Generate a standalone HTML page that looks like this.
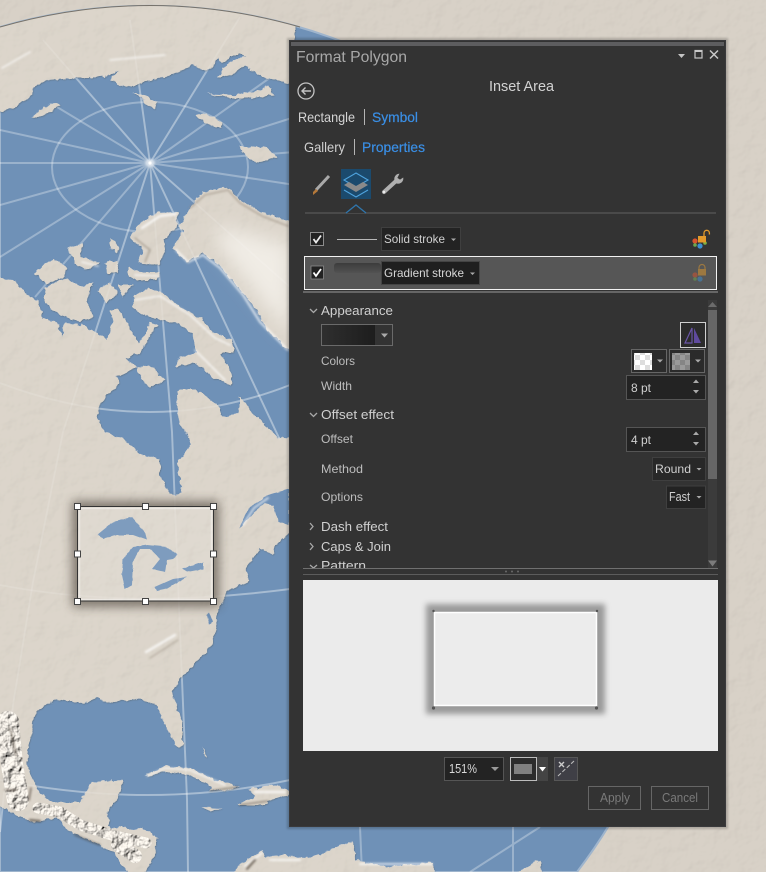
<!DOCTYPE html>
<html><head><meta charset="utf-8"><title>Format Polygon</title>
<style>html,body{margin:0;padding:0;background:#d5cfc6;width:766px;height:872px;overflow:hidden}svg{display:block}text{font-family:"Liberation Sans",sans-serif}</style></head>
<body>
<svg xmlns="http://www.w3.org/2000/svg" width="766" height="872" viewBox="0 0 766 872">
<defs>
<filter id="tex" x="0" y="0" width="100%" height="100%">
<feTurbulence type="fractalNoise" baseFrequency=".06" numOctaves="3" seed="4" result="n"/>
<feDiffuseLighting in="n" surfaceScale=".55" diffuseConstant="1.15" lighting-color="#fff" result="l"><feDistantLight azimuth="225" elevation="60"/></feDiffuseLighting>
<feBlend in="SourceGraphic" in2="l" mode="multiply" result="b"/>
<feComposite in="b" in2="SourceAlpha" operator="in"/>
</filter>
<filter id="land" x="-5%" y="-5%" width="110%" height="110%">
<feTurbulence type="fractalNoise" baseFrequency=".16" numOctaves="3" seed="9" result="w"/>
<feDisplacementMap in="SourceGraphic" in2="w" scale="5" xChannelSelector="R" yChannelSelector="G" result="d"/>
<feTurbulence type="fractalNoise" baseFrequency=".06" numOctaves="3" seed="4" result="n"/>
<feDiffuseLighting in="n" surfaceScale=".5" diffuseConstant="1.15" lighting-color="#fff" result="l"><feDistantLight azimuth="225" elevation="60"/></feDiffuseLighting>
<feBlend in="d" in2="l" mode="multiply" result="b"/>
<feComposite in="b" in2="d" operator="in" result="c"/>
<feDropShadow in="c" dx=".5" dy=".7" stdDeviation=".5" flood-color="#4a3f33" flood-opacity=".35"/>
</filter>
<filter id="wob" x="-5%" y="-5%" width="110%" height="110%">
<feTurbulence type="fractalNoise" baseFrequency=".12" numOctaves="2" seed="2" result="w"/>
<feDisplacementMap in="SourceGraphic" in2="w" scale="2.500" xChannelSelector="R" yChannelSelector="G"/>
</filter>
<filter id="rough" x="-10%" y="-10%" width="120%" height="120%">
<feTurbulence type="fractalNoise" baseFrequency=".11" numOctaves="3" seed="7" result="n"/>
<feDiffuseLighting in="n" surfaceScale="5" diffuseConstant="1.150" lighting-color="#f4efe7" result="l"><feDistantLight azimuth="225" elevation="55"/></feDiffuseLighting>
<feComposite in="l" in2="SourceAlpha" operator="in"/>
</filter>
<filter id="b1" x="-30%" y="-30%" width="160%" height="160%"><feGaussianBlur stdDeviation="1"/></filter>
<filter id="b3" x="-30%" y="-30%" width="160%" height="160%"><feGaussianBlur stdDeviation="3"/></filter>
<filter id="b5" x="-30%" y="-30%" width="160%" height="160%"><feGaussianBlur stdDeviation="5"/></filter>
<filter id="b8" x="-40%" y="-40%" width="180%" height="180%"><feGaussianBlur stdDeviation="9"/></filter>
<clipPath id="globe"><path d="M0 872V27A538.600 538.600 0 0 1 577 872Z"/></clipPath>
<clipPath id="outInset"><path clip-rule="evenodd" d="M0 0H300V800H0ZM78 507H213V601H78Z"/></clipPath>
<clipPath id="outPrev"><path clip-rule="evenodd" d="M303 580H718V751H303ZM434 612H597V706H434Z"/></clipPath>
<clipPath id="patClip"><rect x="300" y="550" width="405" height="18"/></clipPath>
<pattern id="ck1" width="10" height="10" patternUnits="userSpaceOnUse"><rect width="10" height="10" fill="#fff"/><rect width="5" height="5" fill="#ddd"/><rect x="5" y="5" width="5" height="5" fill="#ddd"/></pattern>
<pattern id="ck2" width="10" height="10" patternUnits="userSpaceOnUse"><rect width="10" height="10" fill="#9a9a9a"/><rect width="5" height="5" fill="#858585"/><rect x="5" y="5" width="5" height="5" fill="#858585"/></pattern>
<linearGradient id="gs" x1="0" x2="1" y1="0" y2="0"><stop offset="0" stop-color="#2f2f2f"/><stop offset="1" stop-color="#1d1d1d"/></linearGradient>
<linearGradient id="gs2" x1="0" x2="0" y1="0" y2="1"><stop offset="0" stop-color="#3c3c3c"/><stop offset="1" stop-color="#525252"/></linearGradient>
</defs>

<!-- Map background -->
<rect width="766" height="872" fill="#d8d1c7" filter="url(#tex)"/>
<path d="M0 872V27A538.600 538.600 0 0 1 577 872Z" fill="#6f91b7" stroke="#9fb5cd" stroke-width="2"/>

<g clip-path="url(#globe)">
<!-- graticule over ocean -->
<g fill="none" stroke="#fff" stroke-opacity=".3" stroke-width="2">
<path d="M150 163L43 40M150 163L130 20M150 163L240 17M150 163L295 60M150 163L295 117M150 163L295 152M150 163L295 185M150 163L280 440M150 163L290 287M150 163L172 432L180 632L187 799L188 872M150 163L63 432L33 582L13 705L0 832M150 163L0 257M150 163L0 205M150 163L0 163M150 163L0 130M150 163L57 107M150 163L35 297"/>
<ellipse cx="150" cy="167" rx="98" ry="65"/>
<path d="M0 383Q150 440 290 385M0 585Q130 610 290 589M0 780Q150 810 290 780"/>
<path d="M360 827L362 872M513 827L513 872M540 827L470 872"/>
</g>
<g filter="url(#land)" fill="#dcd5cb">
<!-- Siberia -->
<path d="M-5 113L13 108 25 100 33 95 32 88 45 80 77 78 90 78 110 75 118 70 110 80 127 87 140 83 160 78 180 72 192 65 207 72 213 67 217 57 223 63 233 55 247 55 227 63 217 78 233 75 245 65 263 78 277 80 295 85 295 -5 -5 -5Z"/>
<path d="M208 94L233 95 263 90 268 85 273 95 250 98 230 98Z"/>
<path d="M133 93L143 95 157 102 155 108 147 105 142 98Z"/>
<path d="M32 117L43 108 57 102 60 105 50 112 37 117Z"/>
<path d="M195 115L207 113 222 123 220 128 203 122Z"/>
<path d="M240 147L253 148 267 147 277 157 257 163 247 157Z"/>
<!-- Greenland -->
<path d="M193 203L203 192 227 187 240 200 263 213 295 223 295 355 267 330 257 310 240 290 217 263 203 253 187 263 173 248 183 230 178 227 187 213Z"/>
<!-- Arctic Canada -->
<path d="M140 223L157 213 178 212 177 227 163 240 165 253 158 265 138 263 143 250 130 237 137 227Z"/>
<path d="M67 247L83 243 80 257 100 263 87 270 75 263Z"/>
<path d="M110 238L120 247 117 253 110 248Z"/>
<path d="M105 263L117 260 118 273 108 273Z"/>
<path d="M128 267L140 272 160 272 158 280 137 280 128 275Z"/>
<path d="M35 273L53 258 67 268 63 278 45 283Z"/>
<path d="M45 287L67 278 83 287 93 282 87 300 93 317 80 322 60 315 45 302Z"/>
<path d="M98 290L110 283 117 293 107 303Z"/>
<path d="M118 285L132 285 122 297Z"/>
<path d="M133 297L147 288 163 293 180 307 200 317 213 333 233 340 233 353 220 353 233 377 230 385 213 377 193 362 175 367 180 357 197 353 192 333 177 323 160 320 140 313 133 307Z"/>
<path d="M137 367L150 365 165 380 150 388 140 377Z"/>
<!-- North America -->
<path d="M-5 278L13 280 25 293 37 300 43 313 42 318 57 322 62 337 65 323 83 325 97 333 107 340 113 320 110 310 120 310 132 333 140 343 150 323 158 325 147 340 140 353 125 358 137 367 117 377 120 382 100 403 97 417 105 432 123 439 143 455 160 459 160 475 170 494 177 495 182 492 177 465 190 445 187 432 178 423 177 390 197 390 220 407 222 417 240 413 240 397 253 413 277 437 300 440 300 535 289 535 283 537 273 548 274 555 260 548 245 570 250 580 227 592 217 614 213 645 197 662 180 679 172 692 183 725 183 744 177 747 163 722 157 705 140 699 107 702 97 697 83 704 57 699 37 710 33 723 27 757 28 770 38 790 50 802 80 802 92 782 123 780 118 797 107 813 110 827 147 830 157 838 155 853 143 877 132 877 113 853 97 843 67 830 57 817 33 822 -5 805Z"/>
<!-- Caribbean -->
<path d="M145 776L165 766 190 768 215 780 240 787 210 792 212 787 190 775 165 772Z"/>
<path d="M248 789L275 785 295 793 270 800 265 805 238 805 255 797Z"/>
<path d="M202 807L222 808 210 811Z"/>
<path d="M202 745L207 757 205 757Z"/>
<!-- South America -->
<path d="M228 877L243 863 263 850 265 857 280 855 310 858 347 843 353 842 355 860 387 867 433 862 435 877Z"/>
<path d="M507 877L540 860 542 877Z"/>
</g>
<!-- water cut-ins -->
<g fill="#6f91b7" filter="url(#wob)">
<path d="M239 528L250 507 268 495 289 489 289 525 278 522 273 505 265 503 254 512 243 525Z"/>
<path d="M97 535L113 522 132 517 145 532 147 540 133 535 117 535 103 539Z"/>
<path d="M123 559L133 547 147 545 167 547 178 555 173 559 167 560 165 572 152 569 160 559 150 549 140 549 133 562 132 585 125 589 122 575Z"/>
<path d="M155 587L173 579 187 577 167 589 157 591Z"/>
<path d="M182 569L203 562 203 569 187 572Z"/>
<path d="M209 612L213 622 209 625 207 615Z"/>
</g>
<!-- relief highlights -->
<path d="M215 225L290 245 290 335 250 285 222 250Z" fill="#f0ece5" filter="url(#b8)"/>
<g filter="url(#b1)" fill="none" stroke-linecap="round">
<g opacity=".55">
<path d="M190 208L205 195 228 190 240 203 262 216 288 226" stroke="#8e8273" stroke-width="1.600"/>
<path d="M135 238L150 250 145 262" stroke="#7a6e60" stroke-width="1.400"/>
<path d="M150 658L178 640" stroke="#8e8475" stroke-width="1.300"/>
</g>
<g opacity=".75">
<path d="M176 250L188 262 203 255 220 268 243 295 260 322 288 350" stroke="#fff" stroke-width="2"/>
<path d="M142 228L160 216 176 214" stroke="#fff" stroke-width="2.500"/>
<path d="M82 262L98 266M135 275L158 276" stroke="#fff" stroke-width="1.600"/>
<path d="M135 300L160 296 190 315 215 338 230 345M195 350L225 380" stroke="#fff" stroke-width="1.600"/>
<path d="M2 68L30 52M110 60L165 55" stroke="#fff" stroke-width="1.500"/>
<path d="M243 525L254 508 268 498" stroke="#fff" stroke-width="1.800"/>
<path d="M146 652L175 635" stroke="#fff" stroke-width="2.500"/>
<path d="M147 776L165 768 190 770 225 785" stroke="#fff" stroke-width="1.500"/>
<path d="M255 792L285 792" stroke="#fff" stroke-width="2.500"/>
<path d="M245 866L262 853M270 860L300 860M360 864L432 864" stroke="#fff" stroke-width="2"/>
</g>
</g>
<!-- Mexico / Central America relief -->
<g filter="url(#rough)" fill="none" stroke="#000" stroke-linejoin="round" stroke-linecap="round">
<path d="M8 722L12 765 18 800" stroke-width="22"/>
<path d="M38 808L60 812 80 825 115 836 146 843" stroke-width="11"/>
<path d="M118 845L135 856" stroke-width="14"/>
</g>
<g filter="url(#b1)" fill="none" stroke="#3d3025" stroke-linecap="round" opacity=".7">
<path d="M10 728L16 755" stroke-width="1.400"/>
<path d="M5 790H16M31 788L29 800" stroke-width="1.400"/>
<path d="M30 820L40 821" stroke-width="2"/>
<path d="M75 835L100 845" stroke-width="1.200"/>
<path d="M210 791L238 787M240 805L268 801" stroke-width="1"/>
<path d="M247 869L255 860" stroke-width="2"/>
</g>
<!-- graticule faint over land -->
<g fill="none" stroke="#fff" stroke-opacity=".13" stroke-width="1.800">
<path d="M150 163L43 40M150 163L130 20M150 163L240 17M150 163L280 440M150 163L290 287M150 163L172 432L180 632L187 799L188 872M150 163L63 432L33 582L13 705L0 832"/>
<path d="M0 383Q150 440 290 385M0 585Q130 610 290 589M0 780Q150 810 290 780"/>
</g>
<ellipse cx="150" cy="163" rx="5" ry="4" fill="#fff" opacity=".6" filter="url(#b1)"/>
<circle cx="150" cy="163" r="1.600" fill="#fff"/>
</g>
<path d="M0 27Q150 -16 300 27" fill="none" stroke="#77726a" stroke-width="1"/>

<!-- Inset area with gradient stroke -->
<g clip-path="url(#outInset)"><rect x="72" y="501" width="147" height="106" fill="#3f372e" opacity=".58" filter="url(#b5)"/></g>
<rect x="78" y="507" width="135" height="94" fill="#fff" fill-opacity=".1"/>
<rect x="79.500" y="508.500" width="132" height="91" fill="none" stroke="#fff" stroke-opacity=".4" stroke-width="1.500"/>
<rect x="77.500" y="506.500" width="136" height="94.500" fill="none" stroke="#333" stroke-width="1"/>
<g fill="#fff" stroke="#444" stroke-width="1">
<rect x="74.500" y="503.500" width="6" height="6"/><rect x="142.500" y="503.500" width="6" height="6"/><rect x="210.500" y="503.500" width="6" height="6"/>
<rect x="74.500" y="551" width="6" height="6"/><rect x="210.500" y="551" width="6" height="6"/>
<rect x="74.500" y="598.500" width="6" height="6"/><rect x="142.500" y="598.500" width="6" height="6"/><rect x="210.500" y="598.500" width="6" height="6"/>
</g>

<!-- Panel -->
<rect x="287" y="38" width="441" height="791" fill="#000" opacity=".2" filter="url(#b1)"/>
<rect x="289" y="40" width="437" height="787" fill="#333"/>
<rect x="289.500" y="40.500" width="436" height="786" fill="none" stroke="#3a3a3c"/>
<rect x="291" y="42" width="433" height="4" fill="#5d5d5f"/>

<text x="296" y="62" font-size="16" fill="#a8a8a8" textLength="111" lengthAdjust="spacingAndGlyphs">Format Polygon</text>
<path d="M678 54h7l-3.500 4z" fill="#c4c4c4"/>
<rect x="695" y="50.500" width="7" height="7.500" fill="none" stroke="#c8c8c8" stroke-width="1.200"/><rect x="695" y="50" width="7" height="2" fill="#c8c8c8"/>
<path d="M710 50.500l8 8M718 50.500l-8 8" stroke="#c8c8c8" stroke-width="1.500"/>

<text x="489" y="91" font-size="14.500" fill="#d2d2d2" textLength="65" lengthAdjust="spacingAndGlyphs">Inset Area</text>
<circle cx="306" cy="91" r="8" fill="none" stroke="#c4c4c4" stroke-width="1.300"/>
<path d="M311 91h-9M305.500 87.500l-3.500 3.500 3.500 3.500" fill="none" stroke="#c4c4c4" stroke-width="1.400"/>

<text x="298" y="122" font-size="14" fill="#d4d4d4" textLength="57" lengthAdjust="spacingAndGlyphs">Rectangle</text>
<rect x="364" y="109" width="1" height="16" fill="#b5b5b5"/>
<text x="372" y="122" font-size="14" fill="#3a8fe6" textLength="46" lengthAdjust="spacingAndGlyphs" stroke="#3a8fe6" stroke-width=".2">Symbol</text>
<text x="304" y="152" font-size="14" fill="#cfcfcf" textLength="41" lengthAdjust="spacingAndGlyphs">Gallery</text>
<rect x="354" y="139" width="1" height="16" fill="#b5b5b5"/>
<text x="362" y="152" font-size="14" fill="#3a8fe6" textLength="63" lengthAdjust="spacingAndGlyphs" stroke="#3a8fe6" stroke-width=".2">Properties</text>

<!-- tabs icons -->
<path d="M329 176L316 190" stroke="#a9a9a9" stroke-width="3"/>
<path d="M316 189l2 2-5 4 0-3z" fill="#b5793a"/>
<rect x="341" y="169" width="30" height="30" fill="#1b4a6d"/>
<g fill="none" stroke="#4ea3de" stroke-width="1.100">
<path d="M356 173l12 7-12 7-12-7z"/>
<path d="M344 190l12 7 12-7"/>
</g>
<path d="M344 185l12 7 12-7-5-3-7 4-7-4z" fill="#8a8a8a"/>
<path d="M384 192L396 181" stroke="#b0b0b0" stroke-width="4" stroke-linecap="round"/>
<path d="M395 181a5 5 0 0 1 4-7l-2 4 3 2 3-2a5 5 0 0 1-7 5z" fill="#b0b0b0" stroke="#b0b0b0" stroke-width=".6"/>
<circle cx="384" cy="192" r="1.200" fill="#eee"/>
<rect x="305" y="212" width="411" height="2" fill="#4a4a4a"/>
<path d="M346 213l10-8 10 8" fill="#333" stroke="#2f76ad" stroke-width="1.300"/>

<!-- row 1 -->
<rect x="310.500" y="232.500" width="13" height="13" fill="#222" stroke="#8c8c8c"/>
<path d="M313.500 239l2.500 3.500 5-7" fill="none" stroke="#eee" stroke-width="1.800"/>
<rect x="337" y="239" width="40" height="1" fill="#b8b8b8"/>
<rect x="381.500" y="227.500" width="79" height="23" fill="#232323" stroke="#3f3f3f"/>
<text x="384" y="243" font-size="12" fill="#d0d0d0" textLength="61" lengthAdjust="spacingAndGlyphs">Solid stroke</text>
<path d="M451 238.500h5l-2.500 2.500z" fill="#aaa"/>
<g>
<circle cx="695" cy="241" r="2.600" fill="#d8542d"/><circle cx="700" cy="246" r="2.600" fill="#3d8fd1"/><circle cx="695" cy="245" r="1.800" fill="#6aa84f"/><circle cx="705" cy="243" r="1.800" fill="#7cb342"/>
<rect x="698" y="236" width="8" height="6.500" fill="#e39a2b"/>
<path d="M704 236v-3a2.700 2.700 0 0 1 5.400 0v1.500" fill="none" stroke="#e39a2b" stroke-width="1.300"/>
</g>

<!-- row 2 -->
<rect x="304.500" y="256.500" width="412" height="33" fill="#565656" stroke="#f2f2f2"/>
<rect x="311" y="266" width="12.500" height="13" fill="#222" stroke="#8a8a8a" stroke-width=".8"/>
<path d="M313.500 272.500l2.500 3.500 5-7" fill="none" stroke="#fff" stroke-width="1.800"/>
<rect x="334" y="263" width="47" height="10" rx="3" fill="url(#gs2)"/>
<rect x="381.500" y="261.500" width="98" height="23" fill="#1f1f1f" stroke="#444"/>
<text x="384" y="277" font-size="12" fill="#d8d8d8" textLength="80" lengthAdjust="spacingAndGlyphs">Gradient stroke</text>
<path d="M470 272.500h5l-2.500 2.500z" fill="#aaa"/>
<g opacity=".5">
<circle cx="695" cy="275" r="2.600" fill="#d8542d"/><circle cx="700" cy="279" r="2.600" fill="#3d8fd1"/><circle cx="695" cy="279" r="1.800" fill="#6aa84f"/>
<rect x="698" y="269" width="8" height="6.500" fill="#e39a2b"/>
<path d="M699 269v-1.500a3 3 0 0 1 6 0v1.500" fill="none" stroke="#e39a2b" stroke-width="1.200"/>
</g>
<rect x="303" y="291" width="415" height="2" fill="#666"/>

<!-- Properties list -->
<g fill="none" stroke="#a8a8a8" stroke-width="1.300">
<path d="M310 309l3.500 3.500 3.500-3.500"/>
<path d="M310 413l3.500 3.500 3.500-3.500"/>
<path d="M310 523l3 3.500-3 3.500"/>
<path d="M310 543l3 3.500-3 3.500"/>
<path d="M310 565l3.500 3 3.500-3"/>
</g>
<text x="321" y="315" font-size="13" fill="#d0d0d0" textLength="72" lengthAdjust="spacingAndGlyphs">Appearance</text>
<rect x="321.500" y="324.500" width="71" height="21" fill="#333" stroke="#6a6a6a"/>
<rect x="322" y="325" width="53" height="20" fill="url(#gs)"/>
<path d="M381 333.500h7l-3.500 4z" fill="#aaa"/>
<rect x="680.500" y="322.500" width="25" height="25" fill="#2b2b2b" stroke="#cfcfcf"/>
<path d="M685 343l7-15v15z" fill="none" stroke="#6a55a8" stroke-width="1.200"/>
<path d="M694 328l7 15h-7z" fill="#5f4a9e"/>

<text x="321" y="365" font-size="12" fill="#bdbdbd" textLength="34" lengthAdjust="spacingAndGlyphs">Colors</text>
<rect x="631.500" y="349.500" width="35" height="23" fill="#2b2b2b" stroke="#666"/>
<rect x="634" y="353" width="18" height="17" fill="url(#ck1)"/>
<path d="M657 359.500h6l-3 3z" fill="#aaa"/>
<rect x="669.500" y="349.500" width="35" height="23" fill="#2b2b2b" stroke="#666"/>
<rect x="672" y="353" width="18" height="17" fill="url(#ck2)"/>
<path d="M695 359.500h6l-3 3z" fill="#aaa"/>

<text x="321" y="390" font-size="12" fill="#bdbdbd" textLength="31" lengthAdjust="spacingAndGlyphs">Width</text>
<rect x="626.500" y="375.500" width="79" height="24" fill="#232323" stroke="#555"/>
<text x="631" y="392" font-size="12" fill="#d0d0d0" textLength="20" lengthAdjust="spacingAndGlyphs">8 pt</text>
<path d="M693 383h6l-3-3.500zM693 390h6l-3 3.500z" fill="#aaa"/>

<text x="321" y="419" font-size="13" fill="#d0d0d0" textLength="73" lengthAdjust="spacingAndGlyphs">Offset effect</text>
<text x="321" y="443" font-size="12" fill="#bdbdbd" textLength="32" lengthAdjust="spacingAndGlyphs">Offset</text>
<rect x="626.500" y="427.500" width="79" height="24" fill="#232323" stroke="#555"/>
<text x="631" y="444" font-size="12" fill="#d0d0d0" textLength="20" lengthAdjust="spacingAndGlyphs">4 pt</text>
<path d="M693 435h6l-3-3.500zM693 442h6l-3 3.500z" fill="#aaa"/>

<text x="321" y="473" font-size="12" fill="#bdbdbd" textLength="42" lengthAdjust="spacingAndGlyphs">Method</text>
<rect x="652.500" y="457.500" width="53" height="23" fill="#282828" stroke="#3f3f3f"/>
<text x="655" y="473" font-size="12" fill="#d0d0d0" textLength="36" lengthAdjust="spacingAndGlyphs">Round</text>
<path d="M696.500 468h5l-2.500 2.500z" fill="#aaa"/>

<text x="321" y="501" font-size="12" fill="#bdbdbd" textLength="42" lengthAdjust="spacingAndGlyphs">Options</text>
<rect x="666.500" y="486" width="39" height="22.500" fill="#232323" stroke="#3f3f3f"/>
<text x="669" y="501" font-size="12.500" fill="#d0d0d0" textLength="21" lengthAdjust="spacingAndGlyphs">Fast</text>
<path d="M696.500 496h5l-2.500 2.500z" fill="#aaa"/>

<text x="321" y="531" font-size="13" fill="#d0d0d0" textLength="67" lengthAdjust="spacingAndGlyphs">Dash effect</text>
<text x="321" y="551" font-size="13" fill="#d0d0d0" textLength="70" lengthAdjust="spacingAndGlyphs">Caps &amp; Join</text>
<g clip-path="url(#patClip)"><text x="321" y="570" font-size="13" fill="#d0d0d0" textLength="45" lengthAdjust="spacingAndGlyphs">Pattern</text></g>

<!-- scrollbar -->
<rect x="708" y="300" width="9" height="268" fill="#3b3b3b"/>
<rect x="708" y="310" width="9" height="169" fill="#666"/>
<path d="M708 307l4.500-5 4.500 5z" fill="#6c6c6c"/>
<path d="M708 560.500h9l-4.500 6z" fill="#7c7c7c"/>

<rect x="303" y="568" width="415" height="1" fill="#707070"/>
<rect x="303" y="574" width="415" height="1" fill="#5c5c5c"/>
<g fill="#6a6a6a"><circle cx="506" cy="571.500" r="1"/><circle cx="512" cy="571.500" r="1"/><circle cx="518" cy="571.500" r="1"/></g>

<!-- Preview -->
<rect x="303" y="580" width="415" height="171" fill="#ebebeb"/>
<g clip-path="url(#outPrev)"><rect x="426" y="604" width="179" height="110" fill="#777" opacity=".7" filter="url(#b3)"/></g>
<rect x="434" y="612" width="163" height="94" fill="#ececec"/>
<path d="M434.500 612.500H596.500V705.500H434.500Z" fill="none" stroke="#fff" stroke-width="1.500"/>
<g fill="#555"><circle cx="433.500" cy="611" r="1.200"/><circle cx="597" cy="611" r="1.200"/><circle cx="433.500" cy="708" r="1.600"/><circle cx="596.500" cy="708" r="1.600"/></g>

<!-- Preview controls -->
<rect x="444.500" y="757.500" width="59" height="23" fill="#232323" stroke="#555"/>
<text x="449" y="773" font-size="12.500" fill="#d8d8d8" textLength="28" lengthAdjust="spacingAndGlyphs">151%</text>
<path d="M491 767h8l-4 4z" fill="#9a9a9a"/>
<rect x="536" y="757" width="12" height="24" fill="#444"/>
<path d="M539 767h7l-3.500 4.500z" fill="#fff"/>
<rect x="510.500" y="757.500" width="26" height="23" fill="#2c2c2c" stroke="#bdbdbd"/>
<rect x="514" y="764" width="18" height="10" fill="#808080"/>
<rect x="554.500" y="757.500" width="23" height="23" fill="#3f3f46" stroke="#575757"/>
<path d="M558 776L574 761" stroke="#bbb" stroke-width="1.100" stroke-dasharray="4 2"/>
<path d="M559 762l5 5M564 762l-5 5" stroke="#ccc" stroke-width="1.400"/>

<rect x="588.500" y="786.500" width="52" height="23" fill="none" stroke="#666"/>
<text x="600" y="802" font-size="12.500" fill="#7a7a7a" textLength="30" lengthAdjust="spacingAndGlyphs">Apply</text>
<rect x="651.500" y="786.500" width="57" height="23" fill="none" stroke="#666"/>
<text x="662" y="802" font-size="12.500" fill="#7a7a7a" textLength="36" lengthAdjust="spacingAndGlyphs">Cancel</text>
</svg>
</body></html>
